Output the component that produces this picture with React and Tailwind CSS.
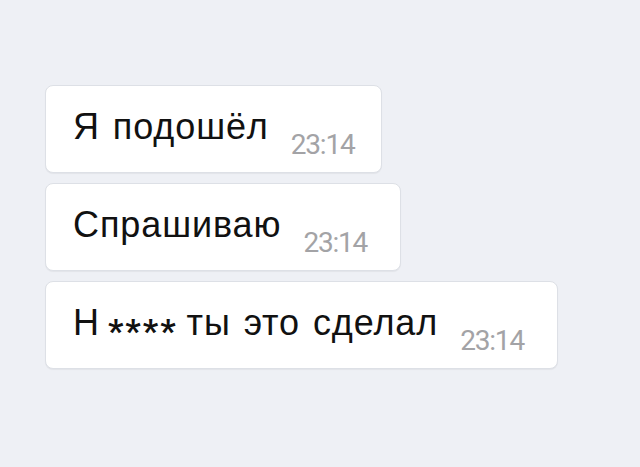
import React from 'react';

const messages = [
  { text: 'Я подошёл', time: '23:14', width: 'w-[337px]' },
  { text: 'Спрашиваю', time: '23:14', width: 'w-[356px]' },
  { text: 'ты это сделал', time: '23:14', width: 'w-[513px]', censored: true },
];

function Bubble({ msg }) {
  return (
    <div className={`${msg.width} h-[88px] bg-white rounded-[8px] border border-[#dde0e6] shadow-[0_1px_1px_rgba(0,0,0,0.05)] flex items-start pl-[27px] pt-[21px]`}>
      <span className="font-['Liberation_Sans',Arial,sans-serif] text-[36px] leading-[40px] text-[#111] tracking-[0.9px] [word-spacing:2px] whitespace-nowrap">
        {msg.censored ? (
          <>
            Н
            <span className="font-['Roboto',sans-serif] font-bold text-[34px] tracking-[2px] ml-[8px] mr-[-4px] align-[-8px]">****</span>
            {' '}{msg.text}
          </>
        ) : msg.text}
      </span>
      <span className="ml-[22px] mt-[23px] font-['Roboto',sans-serif] text-[28px] leading-[30px] text-[#a3a3a6] tracking-[-1.2px]">{msg.time}</span>
    </div>
  );
}

export default function App() {
  return (
    <div className="w-[640px] h-[467px] bg-[#eef0f5] pt-[85px] pl-[45px] flex flex-col gap-[10px]">
      {messages.map((m, i) => (
        <Bubble key={i} msg={m} />
      ))}
    </div>
  );
}
